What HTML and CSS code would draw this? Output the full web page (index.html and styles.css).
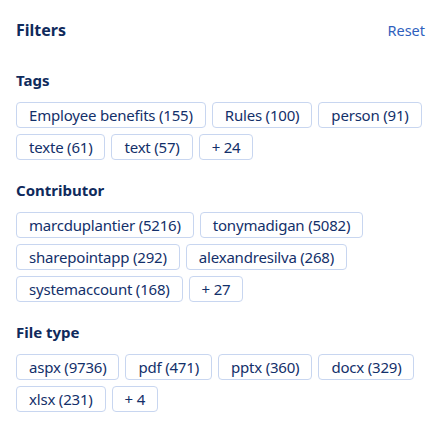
FILE: index.html
```html
<!DOCTYPE html>
<html>
<head>
<meta charset="utf-8">
<link rel="stylesheet" href="styles.css">
</head>
<body>
<div class="panel">
  <div class="header">
    <h1 class="title">Filters</h1>
    <a class="reset" href="#">Reset</a>
  </div>
  <section class="group">
    <h2 class="group-title">Tags</h2>
    <div class="chips">
      <button class="chip">Employee benefits (155)</button>
      <button class="chip">Rules (100)</button>
      <button class="chip">person (91)</button>
      <button class="chip">texte (61)</button>
      <button class="chip">text (57)</button>
      <button class="chip">+ 24</button>
    </div>
  </section>
  <section class="group">
    <h2 class="group-title">Contributor</h2>
    <div class="chips">
      <button class="chip">marcduplantier (5216)</button>
      <button class="chip">tonymadigan (5082)</button>
      <button class="chip">sharepointapp (292)</button>
      <button class="chip">alexandresilva (268)</button>
      <button class="chip">systemaccount (168)</button>
      <button class="chip">+ 27</button>
    </div>
  </section>
  <section class="group">
    <h2 class="group-title">File type</h2>
    <div class="chips">
      <button class="chip">aspx (9736)</button>
      <button class="chip">pdf (471)</button>
      <button class="chip">pptx (360)</button>
      <button class="chip">docx (329)</button>
      <button class="chip">xlsx (231)</button>
      <button class="chip">+ 4</button>
    </div>
  </section>
</div>
</body>
</html>
```
FILE: styles.css
```css
* { box-sizing: border-box; }
html, body { margin: 0; padding: 0; background: #ffffff; }
body {
  font-family: "Noto Sans", "Open Sans", sans-serif;
  color: #13306a;
}
.panel {
  padding: 18px 11px 10px 16px;
}
.header {
  display: flex;
  justify-content: space-between;
  align-items: baseline;
}
.title {
  margin: 0;
  font-size: 16px;
  font-weight: 700;
  line-height: 24px;
  color: #0f2a5c;
}
.reset {
  font-size: 14.5px;
  color: #2f5fbd;
  text-decoration: none;
  line-height: 24px;
}
.group { margin-top: 26px; }
.group + .group { margin-top: 18px; }
.group-title {
  margin: 0 0 10px 0;
  font-size: 15px;
  font-weight: 700;
  line-height: 24px;
  color: #0f2a5c;
}
.chips {
  display: flex;
  flex-wrap: wrap;
  gap: 6px 6px;
}
.chip {
  font-family: inherit;
  font-size: 15px;
  letter-spacing: -0.2px;
  line-height: 24px;
  padding: 0 12px;
  border: 1px solid #c8d6f0;
  border-radius: 4px;
  background: #ffffff;
  color: #13306a;
  cursor: pointer;
}
```
